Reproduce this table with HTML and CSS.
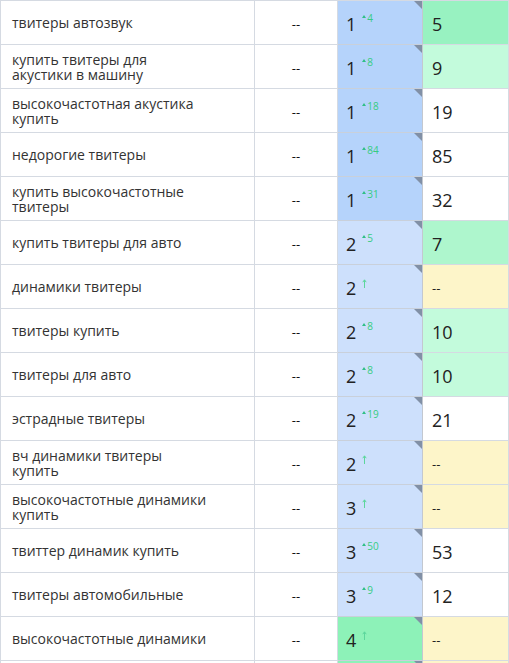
FILE: index.html
```html
<!DOCTYPE html>
<html lang="ru">
<head>
<meta charset="utf-8">
<title>Позиции</title>
<link rel="stylesheet" href="styles.css">
</head>
<body>
<div class="grid">
  <div class="kw">твитеры автозвук</div><div class="dash">--</div>
  <div class="pos b1">1<span class="d"><i class="tri"></i>4</span></div><div class="val g1">5</div>

  <div class="kw"><span class="ln">купить твитеры для</span><span class="ln">акустики в машину</span></div><div class="dash">--</div>
  <div class="pos b1">1<span class="d"><i class="tri"></i>8</span></div><div class="val g3">9</div>

  <div class="kw"><span class="ln">высокочастотная акустика</span><span class="ln">купить</span></div><div class="dash">--</div>
  <div class="pos b1">1<span class="d"><i class="tri"></i>18</span></div><div class="val">19</div>

  <div class="kw">недорогие твитеры</div><div class="dash">--</div>
  <div class="pos b1">1<span class="d"><i class="tri"></i>84</span></div><div class="val">85</div>

  <div class="kw"><span class="ln">купить высокочастотные</span><span class="ln">твитеры</span></div><div class="dash">--</div>
  <div class="pos b1">1<span class="d"><i class="tri"></i>31</span></div><div class="val">32</div>

  <div class="kw">купить твитеры для авто</div><div class="dash">--</div>
  <div class="pos b2">2<span class="d"><i class="tri"></i>5</span></div><div class="val g2">7</div>

  <div class="kw">динамики твитеры</div><div class="dash">--</div>
  <div class="pos b2">2<span class="d"><svg class="up" viewBox="0 0 5 9" width="5" height="9"><path d="M2.5 9V1M0.8 3.2L2.5 0.8L4.2 3.2"/></svg></span></div><div class="val y">--</div>

  <div class="kw">твитеры купить</div><div class="dash">--</div>
  <div class="pos b2">2<span class="d"><i class="tri"></i>8</span></div><div class="val g3">10</div>

  <div class="kw">твитеры для авто</div><div class="dash">--</div>
  <div class="pos b2">2<span class="d"><i class="tri"></i>8</span></div><div class="val g3">10</div>

  <div class="kw">эстрадные твитеры</div><div class="dash">--</div>
  <div class="pos b2">2<span class="d"><i class="tri"></i>19</span></div><div class="val">21</div>

  <div class="kw"><span class="ln">вч динамики твитеры</span><span class="ln">купить</span></div><div class="dash">--</div>
  <div class="pos b2">2<span class="d"><svg class="up" viewBox="0 0 5 9" width="5" height="9"><path d="M2.5 9V1M0.8 3.2L2.5 0.8L4.2 3.2"/></svg></span></div><div class="val y">--</div>

  <div class="kw"><span class="ln">высокочастотные динамики</span><span class="ln">купить</span></div><div class="dash">--</div>
  <div class="pos b2">3<span class="d"><svg class="up" viewBox="0 0 5 9" width="5" height="9"><path d="M2.5 9V1M0.8 3.2L2.5 0.8L4.2 3.2"/></svg></span></div><div class="val y">--</div>

  <div class="kw">твиттер динамик купить</div><div class="dash">--</div>
  <div class="pos b2">3<span class="d"><i class="tri"></i>50</span></div><div class="val">53</div>

  <div class="kw">твитеры автомобильные</div><div class="dash">--</div>
  <div class="pos b2">3<span class="d"><i class="tri"></i>9</span></div><div class="val">12</div>

  <div class="kw">высокочастотные динамики</div><div class="dash">--</div>
  <div class="pos gp">4<span class="d"><svg class="up" viewBox="0 0 5 9" width="5" height="9"><path d="M2.5 9V1M0.8 3.2L2.5 0.8L4.2 3.2"/></svg></span></div><div class="val y">--</div>

  <div class="kw"></div><div class="dash"></div>
  <div class="pos gp"></div><div class="val y"></div>
</div>
</body>
</html>
```
FILE: styles.css
```css
html, body {
  margin: 0;
  padding: 0;
  background: #fff;
}
body {
  font-family: "Open Sans", "Noto Sans", sans-serif;
  color: #2b2b2b;
  overflow: hidden;
  height: 663px;
}
.grid {
  display: grid;
  grid-template-columns: 254px 83px 85px 86px;
  grid-auto-rows: 44px;
  border-left: 1px solid #d5dae2;
  border-top: 1px solid #d5dae2;
  width: 508px;
}
.grid > div {
  border-right: 1px solid #d5dae2;
  border-bottom: 1px solid #d5dae2;
  display: flex;
  align-items: center;
  box-sizing: border-box;
}
.kw {
  flex-direction: column;
  justify-content: center;
  align-items: flex-start !important;
  padding: 0 0 0 11px;
  font-size: 14px;
  line-height: 15px;
  color: #333;
}
.ln {
  display: block;
  height: 15px;
}
.dash {
  justify-content: center;
  font-size: 13px;
  color: #111;
  padding-top: 2px;
}
.pos {
  position: relative;
  padding: 2px 0 0 8px;
  font-size: 18px;
  line-height: 20px;
  color: #222;
  align-items: center;
  border-right-color: #c3c8d0 !important;
  border-bottom-color: #c9d0da !important;
}
.pos::after {
  content: "";
  position: absolute;
  top: 0;
  right: 0;
  width: 0;
  height: 0;
  border-top: 8px solid #8190a6;
  border-left: 8px solid transparent;
}
.pos .d {
  align-self: flex-start;
  margin-top: 9px;
  margin-left: 6px;
  font-size: 10px;
  line-height: 12px;
  color: #36cc82;
  display: inline-flex;
  align-items: flex-end;
}
.tri {
  display: inline-block;
  width: 0;
  height: 0;
  border-left: 2px solid transparent;
  border-right: 2px solid transparent;
  border-bottom: 3px solid #2fbf86;
  margin: 0 1px 6px 0;
}
.up {
  display: block;
  margin-top: 3px;
  fill: none;
  stroke: #5cd69c;
  stroke-width: 1;
}
.b1 { background: #b5d3fb; }
.b2 { background: #cde0fc; }
.gp { background: #8df2b8; }
.val {
  padding: 2px 0 0 9px;
  font-size: 18px;
  line-height: 20px;
  color: #222;
}
.val.y {
  font-size: 13px;
}
.g1 { background: #98f2c1; }
.g2 { background: #aef6cd; }
.g3 { background: #c3fbdc; }
.y { background: #fdf5c9; }
```
